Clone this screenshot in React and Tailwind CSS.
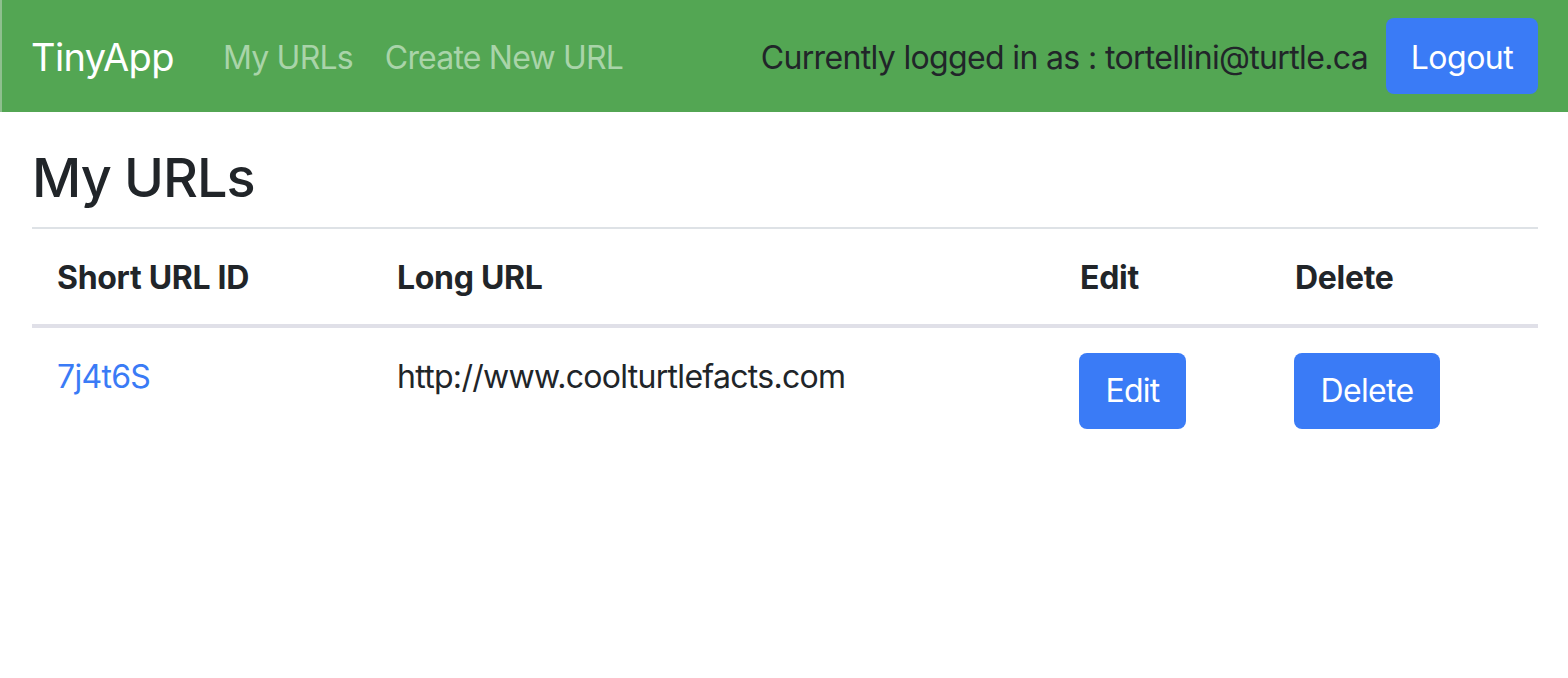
export default function App() {
  return (
    <div className="min-h-screen bg-white text-[#212529]" style={{ fontFamily: 'Inter, "Liberation Sans", sans-serif' }}>
      <nav className="h-[112px] bg-[#53a653] border-l-2 border-[#8fbf8f] flex items-center pl-[29px] pr-[30px]">
        <span className="text-[38px] text-white tracking-[-0.6px] mr-[49px] mt-[3px]">TinyApp</span>
        <a className="text-[32px] text-[#a9d4a9] mr-[32px] tracking-[-0.8px] mt-[3px]">My URLs</a>
        <a className="text-[32px] text-[#a9d4a9] tracking-[-0.8px] mt-[3px]">Create New URL</a>
        <div className="ml-auto flex items-center">
          <span className="text-[32px] text-[#212529] tracking-[-0.65px] mr-[18px] mt-[3px]">Currently logged in as : tortellini@turtle.ca</span>
          <button className="h-[76px] w-[152px] pt-[3px] rounded-[8px] bg-[#3a7bf6] text-white text-[32px] tracking-[-0.5px]">Logout</button>
        </div>
      </nav>

      <main className="pl-[32px] pr-[30px] pt-[34px]">
        <h3 className="text-[54px] font-medium leading-[1.2] tracking-[-1px] mb-[16px]">My URLs</h3>
        <div className="border-t-2 border-[#dee2e6]" />

        <div className="grid grid-cols-[340px_683px_215px_1fr] text-[32px] leading-[48px] tracking-[-0.7px]">
          <div className="contents font-bold tracking-[-0.3px]">
            <div className="pl-[25px] pt-[25px] pb-[22px] border-b-4 border-[#e0e0e8]">Short URL ID</div>
            <div className="pl-[25px] pt-[25px] pb-[22px] border-b-4 border-[#e0e0e8]">Long URL</div>
            <div className="pl-[25px] pt-[25px] pb-[22px] border-b-4 border-[#e0e0e8]">Edit</div>
            <div className="pl-[25px] pt-[25px] pb-[22px] border-b-4 border-[#e0e0e8]">Delete</div>
          </div>
          <div className="pl-[25px] pt-[25px]">
            <a className="text-[#3a7bf6]">7j4t6S</a>
          </div>
          <div className="pl-[25px] pt-[25px]">http://www.coolturtlefacts.com</div>
          <div className="pl-[24px] pt-[25px]">
            <button className="h-[76px] w-[107px] rounded-[8px] bg-[#3a7bf6] text-white">Edit</button>
          </div>
          <div className="pl-[24px] pt-[25px]">
            <button className="h-[76px] w-[146px] rounded-[8px] bg-[#3a7bf6] text-white">Delete</button>
          </div>
        </div>
      </main>
    </div>
  )
}
